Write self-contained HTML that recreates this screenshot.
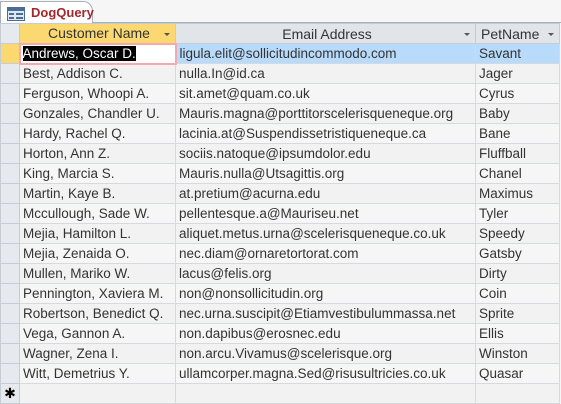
<!DOCTYPE html>
<html><head><style>
*{margin:0;padding:0;box-sizing:border-box}
body{width:561px;height:404px;background:#f6f6f6;font-family:"Liberation Sans",sans-serif;overflow:hidden;position:relative}
.tabbar{position:absolute;left:0;top:0;width:561px;height:23px;background:#f6f6f6;border-bottom:1px solid #a7aeb8}
.tab{position:absolute;left:0;top:1px;width:93px;height:23px;background:#fff;border:1px solid #a7aeb8;border-bottom:none;border-radius:0 10px 0 0;}
.tab span{position:absolute;left:30px;top:3px;font-size:13px;font-weight:bold;color:#a4262c}
table{position:absolute;left:0;top:23px;border-collapse:collapse;table-layout:fixed;font-size:13.5px;color:#333}
td,th{height:20px;border:1px solid #d5dae2;padding:0 0 0 3px;white-space:nowrap;overflow:hidden;font-weight:normal;text-align:left}
th{background:#e1e4e9;color:#333;text-align:center;position:relative;border-color:#c6ccd4;font-size:14px}
th.y{background:#fcd870}
th .a{position:absolute;right:5px;top:9px;width:0;height:0;border-left:3px solid transparent;border-right:3px solid transparent;border-top:3px solid #555}
td.s{background:#e6e9ee;border-color:#c6ccd4;padding:0}
tr:nth-child(odd) td{background:#f2f2f2}
tr:nth-child(odd) td.s{background:#e6e9ee}
tr.sel td{background:#b9dbfb}
tr.sel td.s{background:#fcd870}
tr.sel td.c{background:#fff;border:2px solid #f4a9b0;padding-left:2px}
tr.sel td.c span{background:#000;color:#fff}
tr.new td{background:#f2f2f2}
</style></head><body>
<div class="tabbar"><div class="tab">
<svg style="position:absolute;left:6px;top:5px" width="18" height="14" viewBox="0 0 18 14"><rect x="0.5" y="0.5" width="17" height="13" fill="#dfe8f2" stroke="#4a6c95"/><rect x="1" y="1" width="16" height="3" fill="#4a6c95"/><rect x="2" y="6" width="5" height="2" fill="#4a6c95"/><rect x="9" y="6" width="7" height="2" fill="#4a6c95"/><rect x="2" y="10" width="5" height="2" fill="#4a6c95"/><rect x="9" y="10" width="7" height="2" fill="#4a6c95"/></svg>
<span>DogQuery</span></div></div>
<table>
<colgroup><col style="width:19px"><col style="width:156px"><col style="width:300px"><col style="width:84px"></colgroup>
<tr><th style="background:#e6e9ee"></th><th class="y">Customer Name<i class="a"></i></th><th>Email Address<i class="a"></i></th><th style="text-align:left;padding-left:5px">PetName<i class="a"></i></th></tr>
<tr class="sel"><td class="s"></td><td class="c"><span>Andrews, Oscar D.</span></td><td>ligula.elit@sollicitudincommodo.com</td><td>Savant</td></tr>
<tr><td class="s"></td><td>Best, Addison C.</td><td>nulla.In@id.ca</td><td>Jager</td></tr>
<tr><td class="s"></td><td>Ferguson, Whoopi A.</td><td>sit.amet@quam.co.uk</td><td>Cyrus</td></tr>
<tr><td class="s"></td><td>Gonzales, Chandler U.</td><td>Mauris.magna@porttitorscelerisqueneque.org</td><td>Baby</td></tr>
<tr><td class="s"></td><td>Hardy, Rachel Q.</td><td>lacinia.at@Suspendissetristiqueneque.ca</td><td>Bane</td></tr>
<tr><td class="s"></td><td>Horton, Ann Z.</td><td>sociis.natoque@ipsumdolor.edu</td><td>Fluffball</td></tr>
<tr><td class="s"></td><td>King, Marcia S.</td><td>Mauris.nulla@Utsagittis.org</td><td>Chanel</td></tr>
<tr><td class="s"></td><td>Martin, Kaye B.</td><td>at.pretium@acurna.edu</td><td>Maximus</td></tr>
<tr><td class="s"></td><td>Mccullough, Sade W.</td><td>pellentesque.a@Mauriseu.net</td><td>Tyler</td></tr>
<tr><td class="s"></td><td>Mejia, Hamilton L.</td><td>aliquet.metus.urna@scelerisqueneque.co.uk</td><td>Speedy</td></tr>
<tr><td class="s"></td><td>Mejia, Zenaida O.</td><td>nec.diam@ornaretortorat.com</td><td>Gatsby</td></tr>
<tr><td class="s"></td><td>Mullen, Mariko W.</td><td>lacus@felis.org</td><td>Dirty</td></tr>
<tr><td class="s"></td><td>Pennington, Xaviera M.</td><td>non@nonsollicitudin.org</td><td>Coin</td></tr>
<tr><td class="s"></td><td>Robertson, Benedict Q.</td><td>nec.urna.suscipit@Etiamvestibulummassa.net</td><td>Sprite</td></tr>
<tr><td class="s"></td><td>Vega, Gannon A.</td><td>non.dapibus@erosnec.edu</td><td>Ellis</td></tr>
<tr><td class="s"></td><td>Wagner, Zena I.</td><td>non.arcu.Vivamus@scelerisque.org</td><td>Winston</td></tr>
<tr><td class="s"></td><td>Witt, Demetrius Y.</td><td>ullamcorper.magna.Sed@risusultricies.co.uk</td><td>Quasar</td></tr>
<tr class="new"><td class="s" style="text-align:center;font-size:14px;color:#000">&#x2731;</td><td></td><td></td><td></td></tr>
</table>
</body></html>
